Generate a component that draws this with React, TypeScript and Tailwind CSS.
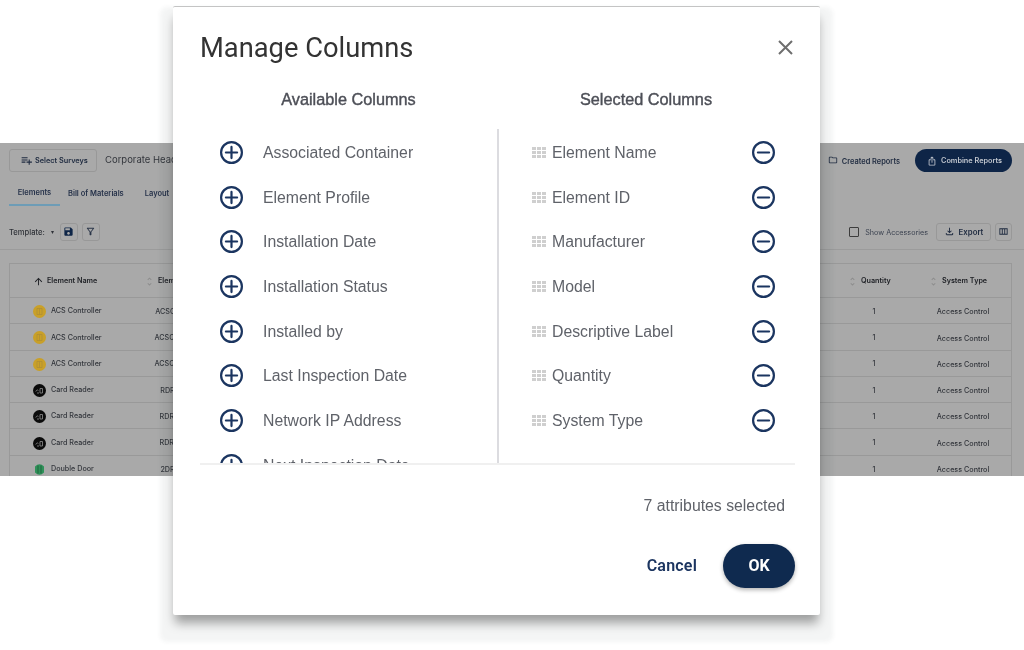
import {
  MdArrowUpward,
  MdOutlineFileDownload,
  MdOutlineFilterAlt,
  MdOutlineFolder,
  MdOutlineIosShare,
  MdOutlineViewColumn,
  MdPlaylistAdd,
  MdSave,
  MdUnfoldMore,
} from "react-icons/md";

const available = [
  "Associated Container",
  "Element Profile",
  "Installation Date",
  "Installation Status",
  "Installed by",
  "Last Inspection Date",
  "Network IP Address",
  "Next Inspection Date",
];

const selected = [
  "Element Name",
  "Element ID",
  "Manufacturer",
  "Model",
  "Descriptive Label",
  "Quantity",
  "System Type",
];

const rows = [
  { name: "ACS Controller", id: "ACSC-001", kind: "acs" },
  { name: "ACS Controller", id: "ACSC-002", kind: "acs" },
  { name: "ACS Controller", id: "ACSC-003", kind: "acs" },
  { name: "Card Reader", id: "RDR-01", kind: "card" },
  { name: "Card Reader", id: "RDR-02", kind: "card" },
  { name: "Card Reader", id: "RDR-03", kind: "card" },
  { name: "Double Door", id: "2DR-01", kind: "door" },
];

const ElementIcon = ({ kind }: { kind: string }) => {
  if (kind === "acs") {
    return (
      <svg width="13" height="13" viewBox="0 0 13 13" className="shrink-0">
        <circle cx="6.5" cy="6.5" r="6.5" fill="#c9a028" />
        <path d="M4 3.5h5v6H4z M6.5 3.5v6" fill="none" stroke="#ab8c36" strokeWidth="0.7" />
      </svg>
    );
  }
  if (kind === "card") {
    return (
      <svg width="13" height="13" viewBox="0 0 13 13" className="shrink-0">
        <circle cx="6.5" cy="6.5" r="6.5" fill="#0b0b0b" />
        <path d="M2.800 7.500c.8-1.600 1.600-2 2.600-1M7 4.500h2.500v4.500H7zM4 9h2" fill="none" stroke="#8f8f8f" strokeWidth="0.8" />
      </svg>
    );
  }
  return (
    <svg width="13" height="13" viewBox="0 0 13 13" className="shrink-0">
      <path d="M2 3.500Q6.500 -1 11 3.500V9.500Q6.500 14 2 9.500z" fill="#2f9159" />
      <path d="M5 2.500v8M8 2.500v8" stroke="#1c5c38" strokeWidth="0.8" />
    </svg>
  );
};

const RoundIcon = ({ plus }: { plus?: boolean }) => (
  <svg width="25" height="25" viewBox="0 0 25 25" fill="none" stroke="#1b3560" strokeWidth="2.2" strokeLinecap="round">
    <circle cx="12.5" cy="12.5" r="10.4" />
    <path d="M6.900 12.500h11.200" />
    {plus && <path d="M12.500 6.900v11.200" />}
  </svg>
);

const DragDots = () => (
  <div className="grid grid-cols-3 gap-px w-[14px] shrink-0">
    {Array.from({ length: 9 }).map((_, i) => (
      <span key={i} className="h-[3px] bg-[#cfcfcf]" />
    ))}
  </div>
);

const SortIcon = () => <MdUnfoldMore size={11} className="text-[#8c8c8c] shrink-0" />;

const Background = () => (
  <div className="h-[333px] bg-[#a9a9a9] overflow-hidden text-[#2f3238] blur-[0.35px] font-['Inter',sans-serif]">
    <div className="flex items-center justify-between pt-[6px] pl-[9px] pr-3">
      <div className="flex items-center gap-2">
        <div className="flex items-center gap-[2px] h-[23px] w-[88px] pl-[10px] border border-[#989898] rounded-[3px] text-[7.3px] font-semibold text-[#1f2b40]">
          <MdPlaylistAdd size={13} />
          <span className="pt-[2px]">Select Surveys</span>
        </div>
        <span className="text-[9.5px] text-[#33363c]">Corporate Headquarters</span>
      </div>
      <div className="flex items-center gap-[15px]">
        <div className="flex items-center gap-[4px] text-[7.4px] font-semibold text-[#1f2b40]">
          <MdOutlineFolder size={10} />
          <span className="pt-[2px]">Created Reports</span>
        </div>
        <div className="flex items-center gap-[4px] h-[23px] w-[97px] pl-3 rounded-full bg-[#0e2547] text-[7.3px] font-semibold text-[#c3c8d0]">
          <MdOutlineIosShare size={10} />
          <span className="pt-[2px]">Combine Reports</span>
        </div>
      </div>
    </div>
    <div className="flex items-center pl-[9px] mt-[10px] h-[24px] text-[7.5px] font-semibold text-[#26324a]">
      <div className="w-[51px] h-[24px] leading-[22px] text-center border-b-2 border-[#6d9cb6]">Elements</div>
      <span className="ml-2">Bill of Materials</span>
      <span className="ml-[21px]">Layout</span>
    </div>
    <div className="flex items-center justify-between pl-[9px] pr-3 pt-2 h-[44px] border-b border-[#9b9b9b]">
      <div className="flex items-center">
        <span className="pt-[2px] text-[7.6px] font-medium">Template:</span>
        <span className="ml-[6px] text-[6px]">▾</span>
        <div className="ml-[6px] flex items-center justify-center w-[18px] h-[18px] border border-[#989898] rounded-[3px]">
          <MdSave size={11} className="text-[#0e2547]" />
        </div>
        <div className="ml-[4px] flex items-center justify-center w-[18px] h-[18px] border border-[#989898] rounded-[3px]">
          <MdOutlineFilterAlt size={11} className="text-[#2a3548]" />
        </div>
      </div>
      <div className="flex items-center">
        <div className="w-[10px] h-[10px] border border-[#3c3c3c] rounded-[1px]" />
        <span className="ml-[6px] pt-[4px] text-[7.2px] text-[#3b4250]">Show Accessories</span>
        <div className="ml-2 flex items-center justify-center gap-[4px] w-[55px] h-[18px] border border-[#989898] rounded-[3px] text-[7.8px] font-semibold text-[#1f2b40]">
          <MdOutlineFileDownload size={11} />
          <span className="pt-[2px]">Export</span>
        </div>
        <div className="ml-[4px] flex items-center justify-center w-[17px] h-[18px] border border-[#989898] rounded-[3px]">
          <MdOutlineViewColumn size={11} className="text-[#1f2b40]" />
        </div>
      </div>
    </div>
    <div className="ml-[9px] mr-3 mt-[13px] border-x border-t border-[#999999]">
      <div className="flex items-center h-[34px] pt-px border-b border-[#999999] text-[7.2px] font-semibold text-[#1d1f24]">
        <div className="w-[130px] flex items-center pl-[23px] gap-[3px]">
          <MdArrowUpward size={11} />
          Element Name
        </div>
        <div className="flex-1 flex items-center pl-[4px] gap-[3px]">
          <SortIcon />
          Element ID
        </div>
        <div className="w-[81px] flex items-center gap-[3px]">
          <SortIcon />
          Quantity
        </div>
        <div className="w-[83px] flex items-center gap-[3px]">
          <SortIcon />
          System Type
        </div>
      </div>
      {rows.map((row) => (
        <div key={row.id} className="flex items-center h-[26.3px] border-b border-[#999999] text-[7.2px] font-medium text-[#33363c]">
          <div className="w-[130px] flex items-center pl-[23px] gap-[5px] pt-[2px]">
            <ElementIcon kind={row.kind} />
            {row.name}
          </div>
          <div className="w-[66px] pt-[3px] text-center">{row.id}</div>
          <div className="flex-1" />
          <div className="w-[44px] pt-[3px] text-center mr-[32px]">1</div>
          <div className="w-[70px] pt-[4px] text-center mr-[13px]">Access Control</div>
        </div>
      ))}
    </div>
  </div>
);

const ManageColumns = () => (
  <div className="absolute left-[173px] top-[6px] w-[647px] h-[609px] bg-white border-t border-[#c4c4c4] rounded-[2px] shadow-[0_14px_4px_13px_rgba(60,70,80,0.055),0_10px_10px_-2px_rgba(0,0,0,0.36)]">
    <div className="flex flex-col h-full blur-[0.3px]">
      <div className="flex items-center justify-between h-[82px] pl-[27px] pr-[27px]">
        <h2 className="text-[27.3px] text-[#333333] font-['Roboto',sans-serif]">Manage Columns</h2>
        <svg width="15" height="15" viewBox="0 0 15 15" stroke="#6e6e6e" strokeWidth="2" fill="none" className="mb-[2px]">
          <path d="M1 1l13 13M14 1L1 14" />
        </svg>
      </div>
      <div className="flex h-[40px] ml-[27px] mr-[25px] -mt-[2px] font-['Liberation_Sans',sans-serif] text-[16.3px] text-[#4d4f57] [-webkit-text-stroke:0.4px_#4d4f57]">
        <div className="w-[297px] text-center">Available Columns</div>
        <div className="flex-1 text-center">Selected Columns</div>
      </div>
      <div className="flex h-[336px] mt-[2px] ml-[27px] mr-[25px] overflow-hidden border-b-2 border-[#f0f0f0] text-[15.8px] text-[#5f6269] font-['Liberation_Sans',sans-serif]">
        <div className="w-[297px] shrink-0 pt-px overflow-hidden">
          {available.map((name) => (
            <div key={name} className="flex items-center h-[44.7px] pl-[19px] gap-[19px]">
              <RoundIcon plus />
              <span className="pt-px">{name}</span>
            </div>
          ))}
        </div>
        <div className="flex-1 pt-px border-l-2 border-[#dcdce0]">
          {selected.map((name) => (
            <div key={name} className="flex items-center h-[44.7px] pl-[33px] pr-[19px]">
              <DragDots />
              <span className="ml-[6px] pt-px flex-1">{name}</span>
              <RoundIcon />
            </div>
          ))}
        </div>
      </div>
      <div className="flex justify-end mt-[29px] pr-[35px] text-[15.8px] text-[#5f6269] font-['Liberation_Sans',sans-serif]">
        7 attributes selected
      </div>
      <div className="flex items-center justify-end gap-[26px] mt-[26px] pr-[25px] font-['Roboto',sans-serif]">
        <button className="text-[16px] font-semibold tracking-[0.2px] text-[#1c3560]">Cancel</button>
        <button className="w-[72px] h-[44px] rounded-full bg-[#0f2a4f] text-[16px] font-bold text-white shadow-[0_2px_4px_rgba(0,0,0,0.3)]">
          OK
        </button>
      </div>
    </div>
  </div>
);

export default function App() {
  return (
    <div className="relative w-[1024px] h-[650px] bg-white overflow-hidden pt-[143px]">
      <Background />
      <ManageColumns />
    </div>
  );
}
